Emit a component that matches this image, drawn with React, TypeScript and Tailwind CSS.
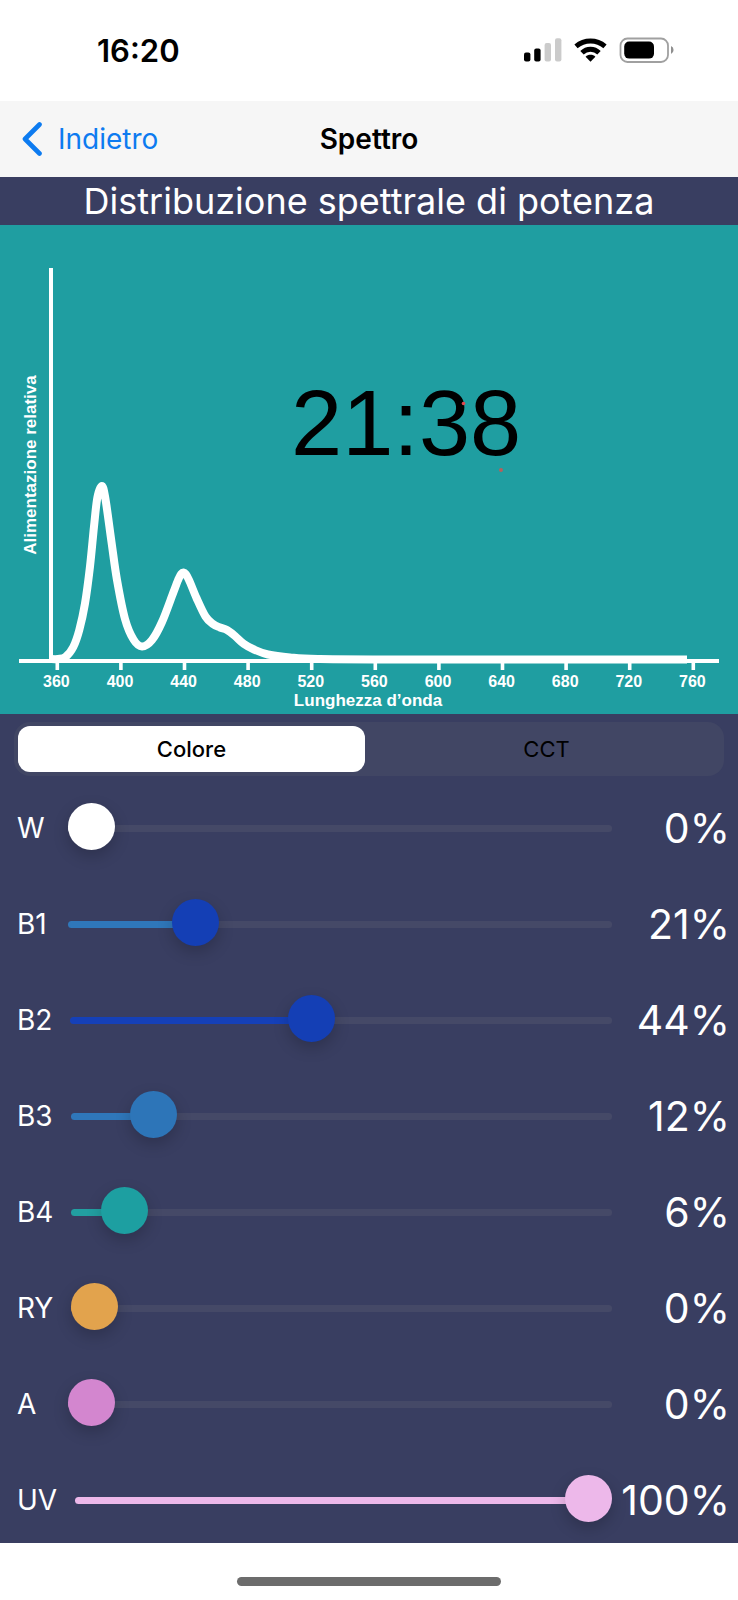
import React, { useState } from "react";

type Channel = {
  id: string;
  value: number;
  thumb: string;
  fill: string;
};

const CHANNELS: Channel[] = [
  { id: "W", value: 0, thumb: "#ffffff", fill: "#ffffff" },
  { id: "B1", value: 21, thumb: "#143fb5", fill: "#2f77ba" },
  { id: "B2", value: 44, thumb: "#143fb5", fill: "#1540b8" },
  { id: "B3", value: 12, thumb: "#2d75b8", fill: "#2f77ba" },
  { id: "B4", value: 6, thumb: "#1d9fa1", fill: "#229fa1" },
  { id: "RY", value: 0, thumb: "#e2a34d", fill: "#e2a34d" },
  { id: "A", value: 0, thumb: "#d386cf", fill: "#d386cf" },
  { id: "UV", value: 100, thumb: "#edb8ea", fill: "#edb8ea" },
];

const WAVELENGTHS = [360, 400, 440, 480, 520, 560, 600, 640, 680, 720, 760];

const SPECTRUM: [number, number][] = [
  [50, 434], [58, 434], [65.5, 432], [73.3, 422], [79.3, 405], [85, 378.5], [90, 341.5], [94, 301.5],
  [97.3, 273], [101.7, 261], [105.3, 273], [111.7, 318.5], [117, 355], [125, 394], [133.5, 414.5], [142, 421.5],
  [152, 415], [162, 397], [173.5, 367], [179, 353], [183.5, 347.5], [188.5, 354], [196.5, 373], [205.5, 391.5],
  [213, 399], [220, 402.5], [227, 405], [235, 411], [244, 419], [254, 424.5], [268, 429.5], [290, 432.5],
  [318, 434], [400, 434.5], [687, 434.5],
];

// Catmull-Rom spline through the sample points
const toPath = (pts: [number, number][]) =>
  pts.slice(1).reduce((d, [x, y], i) => {
    const [ax, ay] = pts[Math.max(i - 1, 0)];
    const [bx, by] = pts[i];
    const [cx, cy] = pts[Math.min(i + 2, pts.length - 1)];
    return `${d} C${bx + (x - ax) / 6} ${by + (y - ay) / 6} ${x - (cx - bx) / 6} ${y - (cy - by) / 6} ${x} ${y}`;
  }, `M${pts[0][0]} ${pts[0][1]}`);

const StatusIcons = () => (
  <svg width="152" height="28" viewBox="0 0 152 28" aria-hidden="true">
    <rect x="1" y="15.5" width="6.4" height="9" rx="2" />
    <rect x="11.2" y="11.5" width="6.4" height="13" rx="2" />
    <rect x="21.6" y="6" width="6.4" height="18.5" rx="2" fill="#cbcbcb" />
    <rect x="32" y="1.3" width="6.4" height="23.2" rx="2" fill="#cbcbcb" />
    <g fill="none" stroke="#000">
      <path d="M53 9.4 A22.5 22.5 0 0 1 82 9.4" strokeWidth="5" />
      <path d="M59 15.8 A12 12 0 0 1 76 15.8" strokeWidth="4.8" />
    </g>
    <path d="M62.6 19.8 C65 17.2 70 17.2 72.4 19.8 L67.5 24.8 Z" />
    <rect x="97.5" y="1.5" width="47.5" height="23.5" rx="7" fill="none" stroke="#a0a0a0" strokeWidth="1.8" />
    <rect x="101.2" y="4.6" width="29.8" height="17" rx="5" />
    <path d="M148 9 a4.4 4.4 0 0 1 0 8 Z" fill="#8f8f8f" />
  </svg>
);

const SpectrumChart = () => (
  <svg
    viewBox="0 0 738 489"
    className="block h-auto w-full bg-[#1f9ea1] font-['Liberation_Sans',Arial,sans-serif]"
    role="img"
    aria-label="Distribuzione spettrale di potenza"
  >
    <g fill="#fff">
      <rect x="49" y="43" width="4" height="393" />
      <rect x="19" y="434" width="700" height="4" />
      {WAVELENGTHS.map((nm, i) => (
        <rect key={nm} x={55.5 + i * 63.6} y="436" width="3.6" height="9" />
      ))}
    </g>
    <path d={toPath(SPECTRUM)} fill="none" stroke="#fff" strokeWidth="8" strokeLinejoin="round" />
    <g fill="#fff" fontWeight="700" textAnchor="middle">
      {WAVELENGTHS.map((nm, i) => (
        <text key={nm} x={56.4 + i * 63.6} y="462" fontSize="16">
          {nm}
        </text>
      ))}
      <text x="368" y="481" fontSize="17">
        Lunghezza d’onda
      </text>
      <text transform="translate(36 240) rotate(-90)" fontSize="17">
        Alimentazione relativa
      </text>
    </g>
    <text x="291" y="230" fontSize="92">
      21:38
    </text>
    <circle cx="463.5" cy="178.5" r="1.8" fill="#e2474f" />
    <circle cx="501" cy="245" r="2" fill="#b5605c" />
  </svg>
);

const ChannelSlider = ({ channel }: { channel: Channel }) => {
  const [value, setValue] = useState(channel.value);
  // the thumb is 47px wide, so its centre runs from 23.5px to 100% - 23.5px
  const stop = `calc(23.5px + (100% - 47px) * ${value / 100})`;
  const style = {
    "--thumb": channel.thumb,
    "--track": `linear-gradient(to right, ${channel.fill} ${stop}, #454967 ${stop})`,
  } as React.CSSProperties;

  return (
    <div className="flex h-12 items-center pl-[17px] pr-2">
      <label htmlFor={channel.id} className="mr-[18px] min-w-[33px] text-[28px] leading-8">
        {channel.id}
      </label>
      <input
        id={channel.id}
        type="range"
        min={0}
        max={100}
        value={value}
        onChange={(e) => setValue(Number(e.target.value))}
        style={style}
        className="h-12 min-w-0 flex-1 cursor-pointer appearance-none bg-transparent [&::-webkit-slider-runnable-track]:h-[7px] [&::-webkit-slider-runnable-track]:rounded-full [&::-webkit-slider-runnable-track]:bg-(image:--track) [&::-webkit-slider-thumb]:-mt-[22px] [&::-webkit-slider-thumb]:size-[47px] [&::-webkit-slider-thumb]:appearance-none [&::-webkit-slider-thumb]:rounded-full [&::-webkit-slider-thumb]:bg-(--thumb) [&::-webkit-slider-thumb]:shadow-[0_6px_16px_rgba(0,0,0,0.2)]"
      />
      <output htmlFor={channel.id} className="w-[118px] text-right text-[41px] leading-[48px]">
        {value}%
      </output>
    </div>
  );
};

const TABS = ["Colore", "CCT"];

const App = () => {
  const [tab, setTab] = useState("Colore");

  return (
    <div className="min-h-screen bg-white font-[Inter,sans-serif] text-black">
      <div className="flex h-[101px] items-center justify-between pl-[97px] pr-[63px]">
        <span className="text-[31px] font-semibold leading-9">16:20</span>
        <StatusIcons />
      </div>

      <header className="grid h-[76px] grid-cols-[1fr_auto_1fr] items-center bg-[#f6f6f6]">
        <button type="button" className="flex items-center gap-4 pl-[22px] text-[28px] leading-8 text-[#0d7bf0]">
          <svg width="20" height="34" viewBox="0 0 20 34" fill="none" stroke="currentColor" strokeWidth="4.6" strokeLinecap="round" strokeLinejoin="round" aria-hidden="true">
            <path d="M17.5 2.5 L3 17 L17.5 31.5" />
          </svg>
          Indietro
        </button>
        <h1 className="text-[28px] font-semibold leading-8">Spettro</h1>
      </header>

      <main className="bg-[#393e61] text-white">
        <h2 className="text-center text-[36px] leading-[48px]">Distribuzione spettrale di potenza</h2>
        <SpectrumChart />

        <div className="pb-[19px] pt-2">
          <div role="tablist" className="mx-[14px] grid grid-cols-2 rounded-2xl bg-[#414664]">
            {TABS.map((name) => (
              <button
                key={name}
                type="button"
                role="tab"
                aria-selected={tab === name}
                onClick={() => setTab(name)}
                className={`m-1 h-[46px] rounded-xl text-[22px] text-black ${
                  tab === name ? "bg-white font-medium" : "font-normal"
                }`}
              >
                {name}
              </button>
            ))}
          </div>

          <div className="mt-7 flex flex-col gap-12">
            {CHANNELS.map((channel) => (
              <ChannelSlider key={channel.id} channel={channel} />
            ))}
          </div>
        </div>
      </main>

      <footer className="flex h-[57px] justify-center pt-[34px]">
        <div className="h-[9px] w-[264px] rounded-full bg-[#6c6c6c]" />
      </footer>
    </div>
  );
};

export default App;
